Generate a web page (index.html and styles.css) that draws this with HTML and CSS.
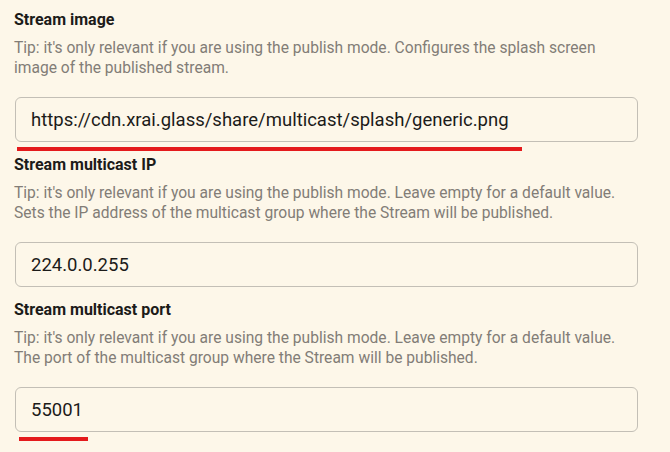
FILE: index.html
```html
<!DOCTYPE html>
<html lang="en">
<head>
<meta charset="utf-8">
<title>Stream settings</title>
<link rel="stylesheet" href="styles.css">
</head>
<body>
<form class="settings">
  <div class="field">
    <label class="label" for="img">Stream image</label>
    <p class="tip">Tip: it's only relevant if you are using the publish mode. Configures the splash screen<br>image of the published stream.</p>
    <div class="input-wrap">
      <input id="img" class="input" type="text" value="https://cdn.xrai.glass/share/multicast/splash/generic.png">
      <span class="mark mark-long"></span>
    </div>
  </div>
  <div class="field">
    <label class="label" for="ip">Stream multicast IP</label>
    <p class="tip">Tip: it's only relevant if you are using the publish mode. Leave empty for a default value.<br>Sets the IP address of the multicast group where the Stream will be published.</p>
    <div class="input-wrap">
      <input id="ip" class="input" type="text" value="224.0.0.255">
    </div>
  </div>
  <div class="field">
    <label class="label" for="port">Stream multicast port</label>
    <p class="tip">Tip: it's only relevant if you are using the publish mode. Leave empty for a default value.<br>The port of the multicast group where the Stream will be published.</p>
    <div class="input-wrap">
      <input id="port" class="input" type="text" value="55001">
      <span class="mark mark-short"></span>
    </div>
  </div>
</form>
</body>
</html>
```

FILE: styles.css
```css
html, body {
  margin: 0;
  padding: 0;
  background: #fdf7e9;
}

body {
  font-family: Roboto, "Liberation Sans", sans-serif;
  width: 670px;
  height: 452px;
  overflow: hidden;
}

.settings {
  display: flex;
  flex-direction: column;
  padding: 10px 0 0 15px;
  width: 623px;
}

.field {
  display: flex;
  flex-direction: column;
  margin-bottom: 13px;
}

.label {
  font-size: 16px;
  line-height: 20px;
  font-weight: 700;
  color: #1c1b19;
  margin-left: -1px;
}

.tip {
  margin: 8px 0 0 -1px;
  font-size: 15.6px;
  line-height: 20px;
  color: #827d77;
}

.input-wrap {
  position: relative;
  margin-top: 19px;
}

.input {
  box-sizing: border-box;
  display: block;
  width: 623px;
  height: 45px;
  margin: 0;
  padding: 0 15px;
  border: 1px solid #c3bfb6;
  border-radius: 6px;
  background: #fdf7e9;
  font-family: Roboto, "Liberation Sans", sans-serif;
  font-size: 18.5px;
  color: #1c1b19;
  outline: none;
}

.mark {
  position: absolute;
  top: 50px;
  height: 4px;
  background: #e41a1c;
}

.mark-long {
  left: 2px;
  width: 505px;
}

.mark-short {
  left: 4px;
  width: 69px;
}
```
